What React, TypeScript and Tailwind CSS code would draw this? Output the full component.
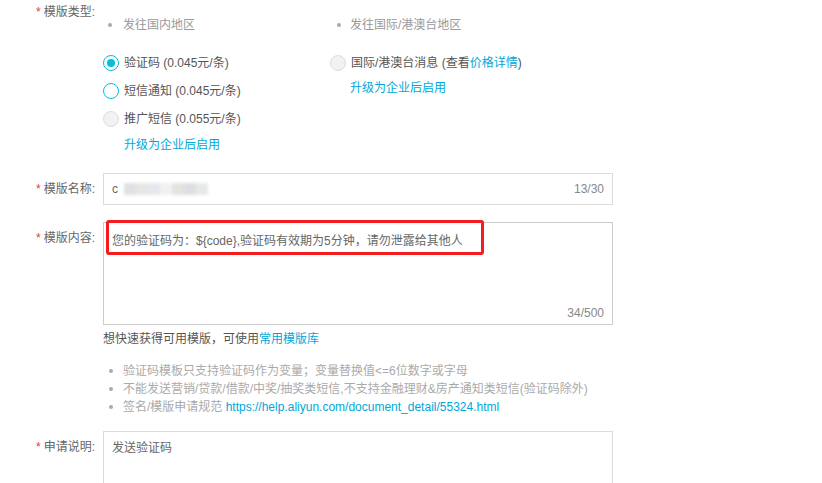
import React from "react";

const font = { fontFamily: '"Liberation Sans", "Noto Sans CJK SC", sans-serif' };

function Label({ text, className = "" }: { text: string; className?: string }) {
  return (
    <div className={`w-[95px] shrink-0 text-right text-[12px] leading-5 text-[#666] ${className}`}>
      <span className="text-[#e4393c] mr-[3px]">*</span>
      {text}
    </div>
  );
}

function Radio({ state }: { state: "checked" | "open" | "disabled" }) {
  if (state === "checked") {
    return (
      <span className="w-4 h-4 rounded-full border border-[#00c1de] bg-white flex items-center justify-center shrink-0">
        <span className="w-2 h-2 rounded-full bg-[#00c1de]" />
      </span>
    );
  }
  if (state === "open") {
    return <span className="w-4 h-4 rounded-full border border-[#00c1de] bg-white shrink-0" />;
  }
  return <span className="w-4 h-4 rounded-full border border-[#ddd] bg-[#f2f2f2] shrink-0" />;
}

function Dot() {
  return <span className="w-[4px] h-[4px] rounded-full bg-[#aaa] shrink-0" />;
}

export default function App() {
  // 模糊处理的模版名称
  const blurs = ["#dcdde2", "#e6e4e2", "#e2e6ea", "#f0f0f0", "#e0e0de", "#dadbe0", "#e4e6e6"];

  return (
    <div className="w-[822px] h-[483px] bg-white overflow-hidden" style={font}>
      {/* 模版类型 */}
      <div className="flex">
        <Label text="模版类型:" className="mt-[2px]" />
        <div className="ml-2 flex">
          <div className="w-[227px]">
            <div className="mt-[15px] h-5 flex items-center text-[12px] text-[#999]">
              <span className="w-[13px] pl-[5px] flex"><Dot /></span>
              <span className="ml-[7px]">发往国内地区</span>
            </div>
            <div className="mt-[14px] h-7 flex items-center gap-[5px] text-[12px] text-[#555]">
              <Radio state="checked" />
              <span>验证码 (0.045元/条)</span>
            </div>
            <div className="h-7 flex items-center gap-[5px] text-[12px] text-[#555]">
              <Radio state="open" />
              <span>短信通知 (0.045元/条)</span>
            </div>
            <div className="h-7 flex items-center gap-[5px] text-[12px] text-[#555]">
              <Radio state="disabled" />
              <span>推广短信 (0.055元/条)</span>
            </div>
            <div className="mt-[2px] h-5 leading-5 pl-[21px] text-[12px] text-[#00a7d8]">升级为企业后启用</div>
          </div>
          <div>
            <div className="mt-[15px] h-5 flex items-center text-[12px] text-[#999]">
              <span className="w-[10px] pl-[7px] flex"><Dot /></span>
              <span className="ml-[10px]">发往国际/港澳台地区</span>
            </div>
            <div className="mt-[14px] h-7 flex items-center gap-[5px] text-[12px] text-[#555]">
              <Radio state="disabled" />
              <span>
                国际/港澳台消息 (查看<span className="text-[#00a7d8]">价格详情</span>)
              </span>
            </div>
            <div className="mt-[1px] h-5 leading-5 pl-[20px] text-[12px] text-[#00a7d8]">升级为企业后启用</div>
          </div>
        </div>
      </div>

      {/* 模版名称 */}
      <div className="flex items-center mt-[18px]">
        <Label text="模版名称:" />
        <div className="ml-2 w-[510px] h-8 border border-[#dcdcdc] flex items-center px-2 text-[12px]">
          <span className="text-[#666]">c</span>
          <div className="flex ml-[6px] blur-[1.5px] opacity-90">
            {blurs.map((c, i) => (
              <span key={i} className="w-3 h-3" style={{ backgroundColor: c }} />
            ))}
          </div>
          <span className="ml-auto text-[#888]">13/30</span>
        </div>
      </div>

      {/* 模版内容 */}
      <div className="flex mt-[17px]">
        <Label text="模版内容:" className="mt-[6px]" />
        <div className="ml-2 relative">
          <div className="w-[510px] h-[103px] border border-[#ccc] flex flex-col px-2 text-[12px]">
            <div className="mt-[8px] leading-5 text-[#666]">您的验证码为：${"{code}"},验证码有效期为5分钟，请勿泄露给其他人</div>
            <div className="mt-auto mb-[1px] text-right leading-5 text-[#888]">34/500</div>
          </div>
          <div className="absolute left-[3px] top-[-2px] w-[378px] h-[35px] border-[3px] border-[#f41c1c] rounded-[3px]" />
          <div className="mt-[4px] h-5 leading-5 text-[12px] text-[#555]">
            想快速获得可用模版，可使用<span className="text-[#00a7d8]">常用模版库</span>
          </div>
          <div className="mt-[13px] text-[12px] text-[#aaa]">
            <div className="h-[18px] flex items-center">
              <span className="w-5 pl-[6px] flex"><Dot /></span>
              <span>验证码模板只支持验证码作为变量；变量替换值&lt;=6位数字或字母</span>
            </div>
            <div className="h-[18px] flex items-center">
              <span className="w-5 pl-[6px] flex"><Dot /></span>
              <span>不能发送营销/贷款/借款/中奖/抽奖类短信,不支持金融理财&amp;房产通知类短信(验证码除外)</span>
            </div>
            <div className="h-[18px] flex items-center">
              <span className="w-5 pl-[6px] flex"><Dot /></span>
              <span>
                签名/模版申请规范 <span className="text-[#00a7d8]">https://help.aliyun.com/document_detail/55324.html</span>
              </span>
            </div>
          </div>
        </div>
      </div>

      {/* 申请说明 */}
      <div className="flex mt-[15px]">
        <Label text="申请说明:" className="mt-[6px]" />
        <div className="ml-2 w-[510px] h-[80px] border border-[#dcdcdc] px-2 text-[12px]">
          <div className="mt-[6px] leading-5 text-[#666]">发送验证码</div>
        </div>
      </div>
    </div>
  );
}
